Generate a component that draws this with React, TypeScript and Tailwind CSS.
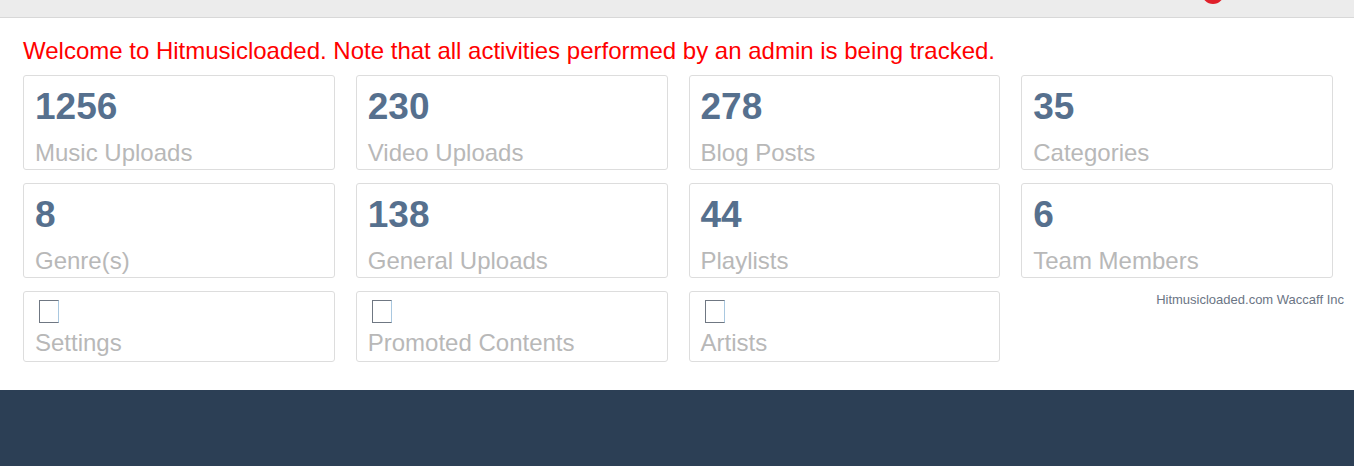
import React from "react";

const stats = [
  { n: "1256", l: "Music Uploads" },
  { n: "230", l: "Video Uploads" },
  { n: "278", l: "Blog Posts" },
  { n: "35", l: "Categories" },
  { n: "8", l: "Genre(s)" },
  { n: "138", l: "General Uploads" },
  { n: "44", l: "Playlists" },
  { n: "6", l: "Team Members" },
];

const links = ["Settings", "Promoted Contents", "Artists"];

export default function App() {
  return (
    <div className="min-h-[466px] bg-white flex flex-col" style={{ fontFamily: '"Liberation Sans", Arial, sans-serif' }}>
      <div className="relative h-[18px] bg-[#ececec] border-b border-[#d8d8d8] overflow-hidden">
        <div className="absolute left-[1202px] top-[-18px] w-[22px] h-[22px] rounded-full bg-[#e0202a]" />
      </div>
      <div className="pl-[23px] pr-[21px] pt-[19px] pb-[28px]">
        <p className="text-[24px] leading-[28px] text-[#ff0000] mb-[10px]">
          Welcome to Hitmusicloaded. Note that all activities performed by an admin is being tracked.
        </p>
        <div className="grid grid-cols-4 gap-x-[21px] gap-y-[13px]">
          {stats.map((s) => (
            <div key={s.l} className="h-[95px] border border-[#dddddd] rounded-[3px] px-[11px] pt-[12px]">
              <div className="text-[37px] leading-[38px] font-bold text-[#56708e]">{s.n}</div>
              <div className="text-[24px] leading-[28px] mt-[13px] text-[#b8b8b8] whitespace-nowrap">{s.l}</div>
            </div>
          ))}
          {links.map((l) => (
            <div key={l} className="h-[71px] border border-[#dddddd] rounded-[3px] px-[15px] pt-[8px]">
              <div className="w-[20px] h-[23px] border border-[#6f7782] border-r-[#a9c8e0]" />
              <div className="text-[24px] leading-[28px] -ml-[4px] mt-[6px] text-[#b8b8b8] whitespace-nowrap">{l}</div>
            </div>
          ))}
          <div className="flex justify-end -mr-[11px] pt-[1px]">
            <span className="text-[13px] leading-[15px] text-[#6b7585]">Hitmusicloaded.com Waccaff Inc</span>
          </div>
        </div>
      </div>
      <div className="flex-1 bg-[#2c3f55]" />
    </div>
  );
}
